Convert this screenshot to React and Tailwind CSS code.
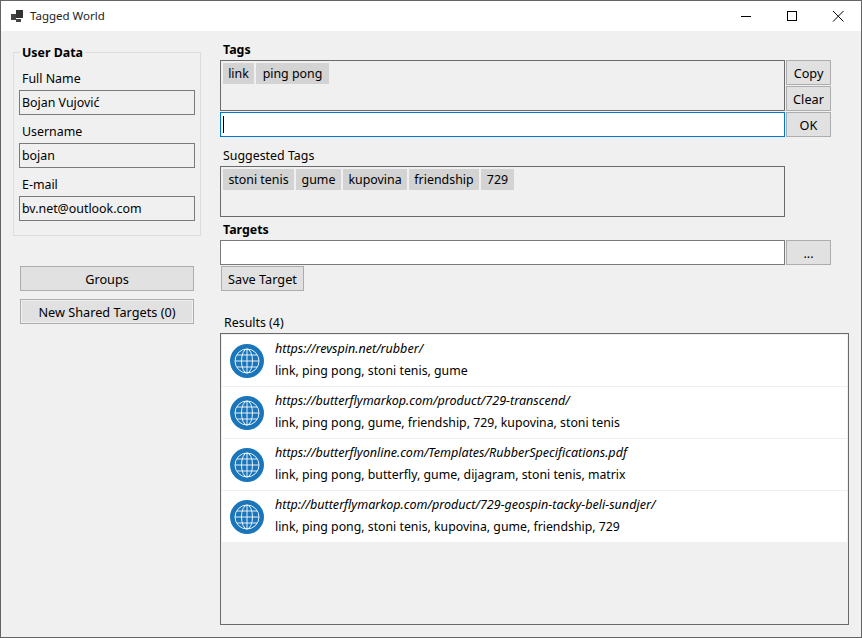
// App.jsx
import React from 'react'

const AppIcon = () => (
    <svg width="12" height="12" viewBox="0 0 12 12" className="block">
        <rect x="0" y="4" width="5" height="6" fill="#444" />
        <rect x="5" y="0" width="7" height="8" fill="#333" />
        <rect x="5" y="9" width="5" height="3" fill="#444" />
    </svg>
)

const Globe = () => (
    <svg width="34" height="34" viewBox="0 0 34 34" className="block shrink-0">
        <circle cx="17" cy="17" r="17" fill="#1b75bb" />
        <g fill="none" stroke="#e8f2f9" strokeWidth="1">
            <circle cx="17" cy="17" r="12" />
            <ellipse cx="17" cy="17" rx="5.5" ry="12" />
            <path d="M17 5V29M5 17H29M7 11H27M7 23H27" />
        </g>
    </svg>
)

const Field = ({ label, value }) => (
    <div className="flex flex-col">
        <span className="pl-[8px] h-[22px] leading-[22px]">{label}</span>
        <div className="mx-[5px] h-[25px] border border-[#7a7a7a] pl-[2px] leading-[24px] bg-[#f0f0f0]">{value}</div>
    </div>
)

const Btn = ({ children, className = '' }) => (
    <button className={`h-[25px] border border-[#adadad] bg-[#e1e1e1] text-center text-[12.7px] leading-[22px] pt-[1px] ${className}`}>
        {children}
    </button>
)

const Chip = ({ children, className = '' }) => (
    <span className={`h-[21px] bg-[#d3d3d3] text-center leading-[22px] ${className}`}>{children}</span>
)

const Result = ({ url, tags }) => (
    <div className="h-[51px] bg-white flex items-center pl-[8px] gap-[11px]">
        <Globe />
        <div className="flex flex-col -mt-[1px]">
            <span className="italic text-[12.55px] h-[22px] leading-[22px]">{url}</span>
            <span className="text-[12.3px] h-[22px] leading-[22px]">{tags}</span>
        </div>
    </div>
)

const App = () => {
    return (
        <div className="w-[862px] h-[638px] border border-[#646464] bg-[#f0f0f0] flex flex-col text-[12.4px] text-black overflow-hidden" style={{ fontFamily: '"Noto Sans", "Open Sans", sans-serif' }}>
            <div className="h-[30px] bg-white flex items-center shrink-0">
                <div className="ml-[10px] mr-[7px]"><AppIcon /></div>
                <span className="text-[11.5px] text-[#222]">Tagged World</span>
                <div className="ml-auto flex items-center">
                    <svg width="46" height="30" viewBox="0 0 46 30"><path d="M18 15.5H28" stroke="#000" /></svg>
                    <svg width="46" height="30" viewBox="0 0 46 30"><rect x="18.5" y="10.5" width="9" height="9" fill="none" stroke="#000" /></svg>
                    <svg width="46" height="30" viewBox="0 0 46 30"><path d="M18 10L28.5 20.5M28.5 10L18 20.5" stroke="#000" /></svg>
                </div>
            </div>

            <div className="flex flex-1 min-h-0">
                {/* left column */}
                <div className="w-[219px] shrink-0 pl-[12px] pt-[21px]">
                    <div className="relative w-[188px] h-[184px] border border-[#dcdcdc] pt-[15px] flex flex-col gap-[6px]">
                        <span className="absolute -top-[8px] left-[6px] px-[2px] bg-[#f0f0f0] font-bold leading-[16px]">User Data</span>
                        <Field label="Full Name" value="Bojan Vujović" />
                        <Field label="Username" value="bojan" />
                        <Field label="E-mail" value="bv.net@outlook.com" />
                    </div>
                    <div className="mt-[30px] ml-[7px] w-[174px] flex flex-col gap-[8px]">
                        <Btn>Groups</Btn>
                        <Btn className="shadow-[inset_0_0_0_1px_#f0f0f0]">New Shared Targets (0)</Btn>
                    </div>
                </div>

                {/* right column */}
                <div className="flex-1 flex flex-col pr-[12px]">
                    <span className="pl-[3px] mt-[9px] h-[20px] leading-[20px] font-bold">Tags</span>
                    <div className="flex gap-[1px]">
                        <div className="w-[565px] h-[51px] border border-[#6a6a6a] flex items-start gap-[2px] pl-[2px] pt-[2px]">
                            <Chip className="w-[31px]">link</Chip>
                            <Chip className="w-[73px]">ping pong</Chip>
                        </div>
                        <div className="flex flex-col gap-[1px] w-[45px]">
                            <Btn>Copy</Btn>
                            <Btn>Clear</Btn>
                        </div>
                    </div>
                    <div className="flex gap-[1px] mt-[1px]">
                        <div className="w-[565px] h-[25px] border border-[#0078d7] bg-white flex items-center pl-[2px]">
                            <div className="w-[1px] h-[17px] bg-black"></div>
                        </div>
                        <Btn className="w-[45px]">OK</Btn>
                    </div>
                    <span className="pl-[3px] mt-[9px] h-[20px] leading-[20px]">Suggested Tags</span>
                    <div className="w-[565px] h-[51px] border border-[#6a6a6a] flex items-start gap-[2px] pl-[2px] pt-[2px]">
                        <Chip className="w-[71px]">stoni tenis</Chip>
                        <Chip className="w-[45px]">gume</Chip>
                        <Chip className="w-[64px]">kupovina</Chip>
                        <Chip className="w-[70px]">friendship</Chip>
                        <Chip className="w-[33px]">729</Chip>
                    </div>
                    <span className="pl-[3px] mt-[2px] h-[21px] leading-[21px] font-bold">Targets</span>
                    <div className="flex gap-[1px]">
                        <div className="w-[565px] h-[25px] border border-[#7a7a7a] bg-white"></div>
                        <Btn className="w-[45px]">...</Btn>
                    </div>
                    <Btn className="w-[83px] ml-[1px] mt-[1px]">Save Target</Btn>
                    <span className="pl-[4px] mt-[21px] h-[21px] leading-[21px]">Results (4)</span>
                    <div className="w-[629px] h-[292px] border border-[#6a6a6a] p-[1px] flex flex-col gap-[1px]">
                        <Result url="https://revspin.net/rubber/" tags="link, ping pong, stoni tenis, gume" />
                        <Result url="https://butterflymarkop.com/product/729-transcend/" tags="link, ping pong, gume, friendship, 729, kupovina, stoni tenis" />
                        <Result url="https://butterflyonline.com/Templates/RubberSpecifications.pdf" tags="link, ping pong, butterfly, gume, dijagram, stoni tenis, matrix" />
                        <Result url="http://butterflymarkop.com/product/729-geospin-tacky-beli-sundjer/" tags="link, ping pong, stoni tenis, kupovina, gume, friendship, 729" />
                    </div>
                </div>
            </div>
        </div>
    )
}

export default App
